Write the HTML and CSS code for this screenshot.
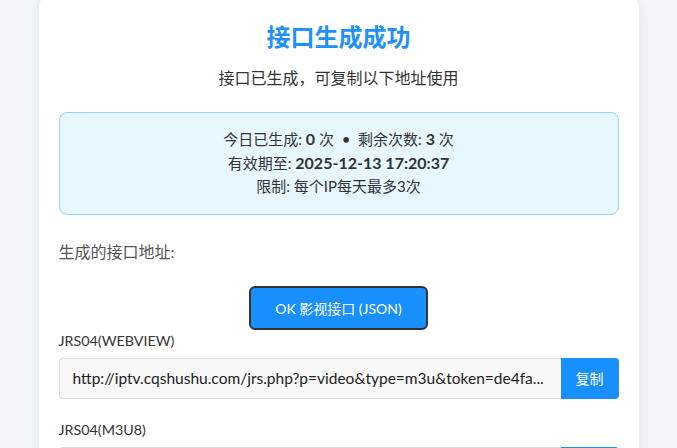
FILE: index.html
```html
<!DOCTYPE html>
<html lang="zh-CN">
<head>
  <meta charset="UTF-8">
  <meta name="viewport" content="width=device-width, initial-scale=1.0">
  <title>接口生成成功</title>
  <link rel="stylesheet" href="styles.css">
</head>
<body>
  <div class="card">
    <h1 class="title">接口生成成功</h1>
    <p class="sub">接口已生成，可复制以下地址使用</p>

    <div class="info">
      <p>今日已生成: <b>0</b> 次 &nbsp;• &nbsp;剩余次数: <b>3</b> 次</p>
      <p>有效期至: <b>2025-12-13 17:20:37</b></p>
      <p>限制: 每个IP每天最多3次</p>
    </div>

    <p class="label">生成的接口地址:</p>

    <div class="btn_wrap">
      <button class="ok_btn">OK 影视接口 (JSON)</button>
    </div>

    <div class="item">
      <p class="item_name">JRS04(WEBVIEW)</p>
      <div class="url_row">
        <input type="text" class="url_txt" value="http://iptv.cqshushu.com/jrs.php?p=video&amp;type=m3u&amp;token=de4fa..." readonly>
        <button class="copy_btn">复制</button>
      </div>
    </div>

    <div class="item">
      <p class="item_name">JRS04(M3U8)</p>
      <div class="url_row">
        <input type="text" class="url_txt" value="http://iptv.cqshushu.com/jrs.php?p=video&amp;type=m3u8&amp;token=de4f..." readonly>
        <button class="copy_btn">复制</button>
      </div>
    </div>
  </div>
</body>
</html>
```

FILE: styles.css
```css
*{margin: 0; padding: 0; box-sizing: border-box;}
body{
  background: #f3f6f9;
  font-family: "Lato", "Noto Sans CJK SC", sans-serif;
  color: #333;
  font-size: 16px;
  overflow: hidden;
}
.card{
  width: 600px;
  margin: -5px auto 0;
  background: #fff;
  border-radius: 12px;
  box-shadow: 0 2px 12px rgba(0,0,0,0.08);
  padding: 25px 20px 40px;
}
.title{
  text-align: center;
  color: #1e90ff;
  font-size: 24px;
  line-height: 34px;
  font-weight: bold;
}
.sub{
  text-align: center;
  margin-top: 13px;
  line-height: 22px;
}
.info{
  margin-top: 23px;
  background: #e6f7ff;
  border: 1px solid #91d5ff;
  border-radius: 8px;
  padding: 15px 10px;
  text-align: center;
  font-size: 15px;
  line-height: 23.5px;
}
.info p{height: 23.5px;}
.info b{font-weight: bold; font-size: 16px; line-height: 1;}
.label{
  margin-top: 26px;
  color: #555;
  line-height: 22px;
}
.btn_wrap{
  margin-top: 23px;
  text-align: center;
}
.ok_btn{
  width: 179px;
  height: 44px;
  background: #1890ff;
  color: #fff;
  border: 2px solid #333;
  border-radius: 6px;
  font-family: inherit;
  font-size: 14px;
  cursor: pointer;
}
.item + .item{margin-top: 20px;}
.item_name{
  font-size: 14.3px;
  line-height: 22px;
  margin-bottom: 6px;
}
.url_row{display: flex;}
.url_txt{
  flex: 1;
  height: 41px;
  border: 1px solid #ddd;
  border-right: none;
  border-radius: 4px 0 0 4px;
  background: #f8f8f8;
  padding: 0 12px 0 13px;
  font-family: inherit;
  font-size: 15.5px;
  color: #222;
}
.copy_btn{
  width: 58px;
  height: 41px;
  background: #1890ff;
  color: #fff;
  border: none;
  border-radius: 0 4px 4px 0;
  font-family: inherit;
  font-size: 14px;
  cursor: pointer;
}
```
